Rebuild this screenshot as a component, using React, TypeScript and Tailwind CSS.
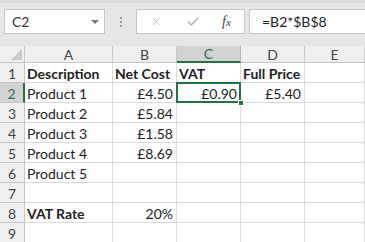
import { X, Check } from "lucide-react";

const cols = ["A", "B", "C", "D", "E"];

type Cell = { v?: string; bold?: boolean; right?: boolean };

const rows: Cell[][] = [
  [{ v: "Description", bold: true }, { v: "Net Cost", bold: true }, { v: "VAT", bold: true }, { v: "Full Price", bold: true }, {}],
  [{ v: "Product 1" }, { v: "£4.50", right: true }, { v: "£0.90", right: true }, { v: "£5.40", right: true }, {}],
  [{ v: "Product 2" }, { v: "£5.84", right: true }, {}, {}, {}],
  [{ v: "Product 3" }, { v: "£1.58", right: true }, {}, {}, {}],
  [{ v: "Product 4" }, { v: "£8.69", right: true }, {}, {}, {}],
  [{ v: "Product 5" }, {}, {}, {}, {}],
  [{}, {}, {}, {}, {}],
  [{ v: "VAT Rate", bold: true }, { v: "20%", right: true }, {}, {}, {}],
  [{}, {}, {}, {}, {}],
];

export default function App() {
  return (
    <div
      className="w-[365px] h-[242px] overflow-hidden bg-white text-[#222]"
      style={{ fontFamily: "Lato, 'Liberation Sans', sans-serif" }}
    >
      {/* formula bar */}
      <div className="h-[46px] bg-[#e6e6e6] border-t-[3px] border-[#dadada] flex items-start pt-[6px] pl-[4px]">
        <div className="w-[101px] h-[25px] bg-white border border-[#c6c6c6] flex items-center justify-between pl-[7px] pr-[5px]">
          <span className="text-[14px] text-[#333]">C2</span>
          <span className="w-0 h-0 border-l-[4px] border-r-[4px] border-t-[4px] border-l-transparent border-r-transparent border-t-[#777]" />
        </div>
        <div className="w-[31px] h-[25px] flex flex-col items-center justify-center gap-[2px]">
          <span className="w-[2px] h-[2px] bg-[#999]" />
          <span className="w-[2px] h-[2px] bg-[#999]" />
          <span className="w-[2px] h-[2px] bg-[#999]" />
        </div>
        <div className="w-[109px] h-[25px] bg-white border border-[#c6c6c6] flex items-center">
          <X className="w-[13px] h-[13px] text-[#b4b4b4] ml-[13px]" strokeWidth={1.5} />
          <Check className="w-[14px] h-[14px] text-[#b4b4b4] ml-[23px]" strokeWidth={2.5} />
          <span
            className="ml-[22px] text-[14px] italic text-[#444]"
            style={{ fontFamily: "'Liberation Serif', serif" }}
          >
            f<span className="text-[11px]">x</span>
          </span>
        </div>
        <div className="ml-[4px] flex-1 h-[25px] bg-white border border-[#c6c6c6] border-r-0 flex items-center pl-[12px]">
          <span className="text-[14px] text-[#222]">=B2*$B$8</span>
        </div>
      </div>

      {/* grid */}
      <div className="grid grid-cols-[25px_88px_64px_64px_64px_1fr] grid-rows-[17px_repeat(9,20px)]">
        <div className="relative bg-[#efefef] border-r border-b border-[#c6c6c6]">
          <span
            className="absolute right-[2px] bottom-[2px] w-0 h-0"
            style={{ borderBottom: "11px solid #c8c8c8", borderLeft: "11px solid transparent" }}
          />
        </div>
        {cols.map((c) => (
          <div
            key={c}
            className={
              c === "C"
                ? "bg-[#d2d2d2] border-r border-[#b8b8b8] border-b-2 border-b-[#217346] text-[#217346] text-[14px] flex items-center justify-center"
                : "bg-[#efefef] border-r border-b border-[#c6c6c6] text-[#444] text-[14px] flex items-center justify-center"
            }
          >
            {c}
          </div>
        ))}
        {rows.map((r, i) => (
          <Row key={i} n={i + 1} cells={r} />
        ))}
      </div>
    </div>
  );
}

function Row({ n, cells }: { n: number; cells: Cell[] }) {
  const sel = n === 2;
  return (
    <>
      <div
        className={
          sel
            ? "bg-[#d2d2d2] border-r-2 border-r-[#217346] border-b border-[#c6c6c6] text-[#217346] text-[14px] flex items-center justify-center pt-[1px]"
            : "bg-[#efefef] border-r border-b border-[#c6c6c6] text-[#444] text-[14px] flex items-center justify-center pt-[1px]"
        }
      >
        {n}
      </div>
      {cells.map((c, j) => (
        <div
          key={j}
          className={
            "relative border-r border-b border-[#dadada] text-[14px] leading-none flex items-end pb-[1px] " +
            (c.right ? "justify-end pr-[3px] " : "pl-[2px] ") +
            (c.bold ? "font-bold" : "")
          }
        >
          {c.v}
          {sel && j === 2 && (
            <>
              <span className="absolute z-10 -left-[1px] -top-[1px] -right-[1px] -bottom-[1px] border-2 border-[#217346]" />
              <span className="absolute z-10 -right-[4px] -bottom-[4px] w-[6px] h-[6px] bg-[#217346] border border-white" />
            </>
          )}
        </div>
      ))}
    </>
  );
}
